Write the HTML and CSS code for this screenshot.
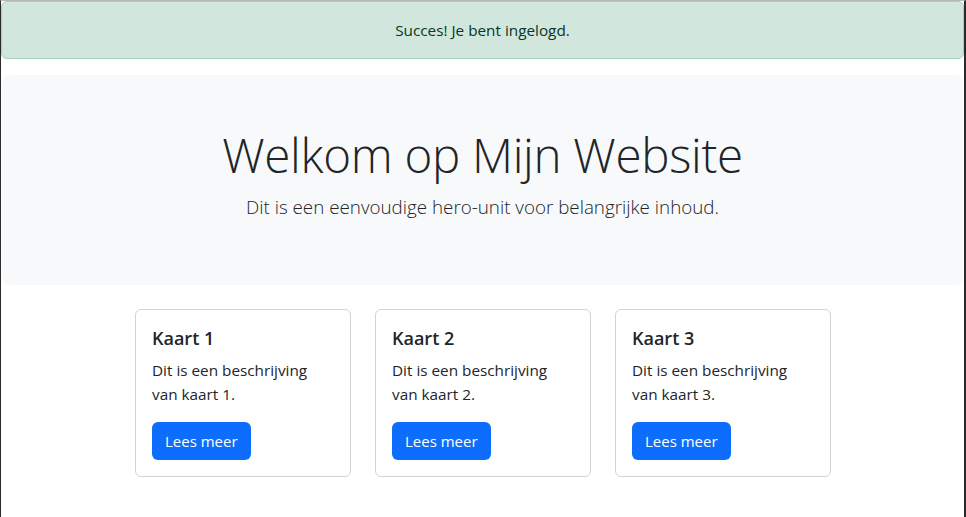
FILE: index.html
```html
<!DOCTYPE html>
<html lang="nl">
<head>
<meta charset="utf-8">
<title>Mijn Website</title>
<link rel="stylesheet" href="styles.css">
</head>
<body>
<div class="frame">
  <div class="alert">Succes! Je bent ingelogd.</div>
  <section class="hero">
    <h1 class="hero-title">Welkom op Mijn Website</h1>
    <p class="hero-lead">Dit is een eenvoudige hero-unit voor belangrijke inhoud.</p>
  </section>
  <div class="cards">
    <div class="card">
      <h5 class="card-title">Kaart 1</h5>
      <p class="card-text">Dit is een beschrijving van kaart 1.</p>
      <a class="btn" href="#">Lees meer</a>
    </div>
    <div class="card">
      <h5 class="card-title">Kaart 2</h5>
      <p class="card-text">Dit is een beschrijving van kaart 2.</p>
      <a class="btn" href="#">Lees meer</a>
    </div>
    <div class="card">
      <h5 class="card-title">Kaart 3</h5>
      <p class="card-text">Dit is een beschrijving van kaart 3.</p>
      <a class="btn" href="#">Lees meer</a>
    </div>
  </div>
</div>
</body>
</html>
```

FILE: styles.css
```css
* { box-sizing: border-box; }
html, body { margin: 0; padding: 0; background: #fff; }
body {
  font-family: "Open Sans", "Noto Sans", sans-serif;
  font-size: 16px;
  line-height: 24px;
  color: #212529;
}
.frame {
  min-height: 100vh;
  border-left: 1px solid #2b2b2b;
  border-right: 2px solid #2b2b2b;
  border-top: 1px solid #b8b8b8;
}
.alert {
  background: #d1e7dd;
  border: 1px solid #a3cfbb;
  border-radius: 6px;
  color: #0a3622;
  text-align: center;
  padding: 16px;
  font-size: 15.3px;
  margin-bottom: 16px;
}
.hero {
  background: #f8f9fa;
  border-radius: 8px;
  margin: 0 1px;
  padding: 51px 16px 47px;
  text-align: center;
}
.hero-title {
  margin: 0 0 8px;
  font-size: 47.5px;
  font-weight: 300;
  line-height: 58px;
  letter-spacing: -0.3px;
}
.hero-lead {
  margin: 0 0 16px;
  font-size: 18.8px;
  font-weight: 300;
  line-height: 30px;
}
.cards {
  display: flex;
  justify-content: center;
  gap: 24px;
  margin-top: 24px;
  padding-left: 1px;
}
.card {
  width: 216px;
  border: 1px solid #d3d4d5;
  border-radius: 6px;
  padding: 16px;
}
.card-title {
  margin: 0 0 8px;
  font-size: 18px;
  font-weight: 600;
  line-height: 24px;
}
.card-text {
  margin: 0 0 16px;
  font-size: 15.3px;
  padding-right: 16px;
}
.btn {
  display: inline-block;
  background: #0d6efd;
  color: #fff;
  text-decoration: none;
  border-radius: 6px;
  padding: 7px 13px;
  font-size: 15px;
  line-height: 24px;
}
```
